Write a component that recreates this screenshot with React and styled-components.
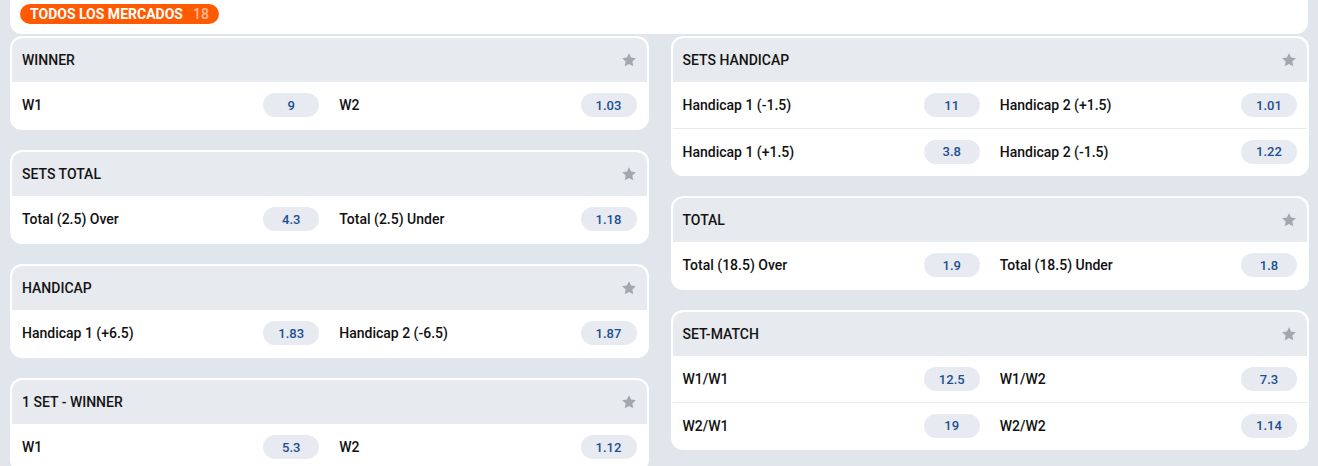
import React from 'react';
import styled, { createGlobalStyle } from 'styled-components';

const Global = createGlobalStyle`
  body {
    margin: 0;
    background: #e1e6ec;
    font-family: Roboto, "Liberation Sans", Arial, sans-serif;
  }
`;

const Page = styled.div`
  width: 1318px;
  height: 466px;
  overflow: hidden;
  background: #e1e6ec;
`;

const TopBar = styled.div`
  margin: 0 10px 2px;
  height: 34px;
  box-sizing: border-box;
  padding: 4px 10px;
  background: #fff;
  border-radius: 0 0 12px 12px;
`;

const Badge = styled.div`
  display: inline-flex;
  align-items: center;
  gap: 10px;
  height: 20px;
  padding: 0 10px;
  border-radius: 10px;
  background: #ff5a00;
  color: #fff;
  font-size: 14px;
  font-weight: 700;
  text-transform: uppercase;
`;

const Count = styled.span`
  color: rgba(255, 255, 255, 0.6);
  font-weight: 500;
`;

const Columns = styled.div`
  display: flex;
  gap: 22px;
  padding: 0 9px 0 10px;
`;

const Column = styled.div`
  flex: 1;
  display: flex;
  flex-direction: column;
  gap: 20px;
`;

const Card = styled.div`
  background: #fff;
  border: 2px solid #fff;
  border-radius: 12px;
  overflow: hidden;
`;

const Header = styled.div`
  display: flex;
  align-items: center;
  justify-content: space-between;
  height: 44px;
  padding: 0 10px;
  background: #e7eaef;
  border-radius: 10px 10px 0 0;
  color: #141414;
  font-size: 14px;
  font-weight: 500;
  text-transform: uppercase;
`;

const Row = styled.div`
  display: grid;
  grid-template-columns: 1fr 1fr;
  height: 46px;
  border-top: ${(p) => (p.divided ? '1px solid #e7eaef' : 'none')};
  box-sizing: border-box;
`;

const Cell = styled.div`
  display: flex;
  align-items: center;
  justify-content: space-between;
  padding: 0 10px;
`;

const Label = styled.span`
  color: #111;
  font-size: 14px;
  font-weight: 500;
`;

const Odd = styled.button`
  width: 56px;
  height: 24px;
  border: none;
  border-radius: 12px;
  background: #e7eaf0;
  color: #1d4f91;
  font-family: inherit;
  font-size: 13px;
  font-weight: 500;
  cursor: pointer;
`;

const Star = () => (
  <svg width="16" height="16" viewBox="0 0 24 24">
    <path
      fill="#a3a7ae"
      d="M12 1.8l3.1 6.6 7.2.9-5.3 5 1.4 7.1L12 17.9l-6.4 3.5 1.4-7.1-5.3-5 7.2-.9z"
    />
  </svg>
);

const left = [
  { title: 'Winner', rows: [[['W1', '9'], ['W2', '1.03']]] },
  { title: 'Sets Total', rows: [[['Total (2.5) Over', '4.3'], ['Total (2.5) Under', '1.18']]] },
  { title: 'Handicap', rows: [[['Handicap 1 (+6.5)', '1.83'], ['Handicap 2 (-6.5)', '1.87']]] },
  { title: '1 Set - Winner', rows: [[['W1', '5.3'], ['W2', '1.12']]] },
];

const right = [
  {
    title: 'Sets Handicap',
    rows: [
      [['Handicap 1 (-1.5)', '11'], ['Handicap 2 (+1.5)', '1.01']],
      [['Handicap 1 (+1.5)', '3.8'], ['Handicap 2 (-1.5)', '1.22']],
    ],
  },
  { title: 'Total', rows: [[['Total (18.5) Over', '1.9'], ['Total (18.5) Under', '1.8']]] },
  {
    title: 'Set-Match',
    rows: [
      [['W1/W1', '12.5'], ['W1/W2', '7.3']],
      [['W2/W1', '19'], ['W2/W2', '1.14']],
    ],
  },
];

const Market = ({ title, rows }) => (
  <Card>
    <Header>
      {title}
      <Star />
    </Header>
    {rows.map((row, i) => (
      <Row key={i} divided={i > 0}>
        {row.map(([name, odd]) => (
          <Cell key={name}>
            <Label>{name}</Label>
            <Odd>{odd}</Odd>
          </Cell>
        ))}
      </Row>
    ))}
  </Card>
);

export default function App() {
  return (
    <Page>
      <Global />
      <TopBar>
        <Badge>
          Todos los mercados <Count>18</Count>
        </Badge>
      </TopBar>
      <Columns>
        <Column>
          {left.map((m) => (
            <Market key={m.title} {...m} />
          ))}
        </Column>
        <Column>
          {right.map((m) => (
            <Market key={m.title} {...m} />
          ))}
        </Column>
      </Columns>
    </Page>
  );
}
